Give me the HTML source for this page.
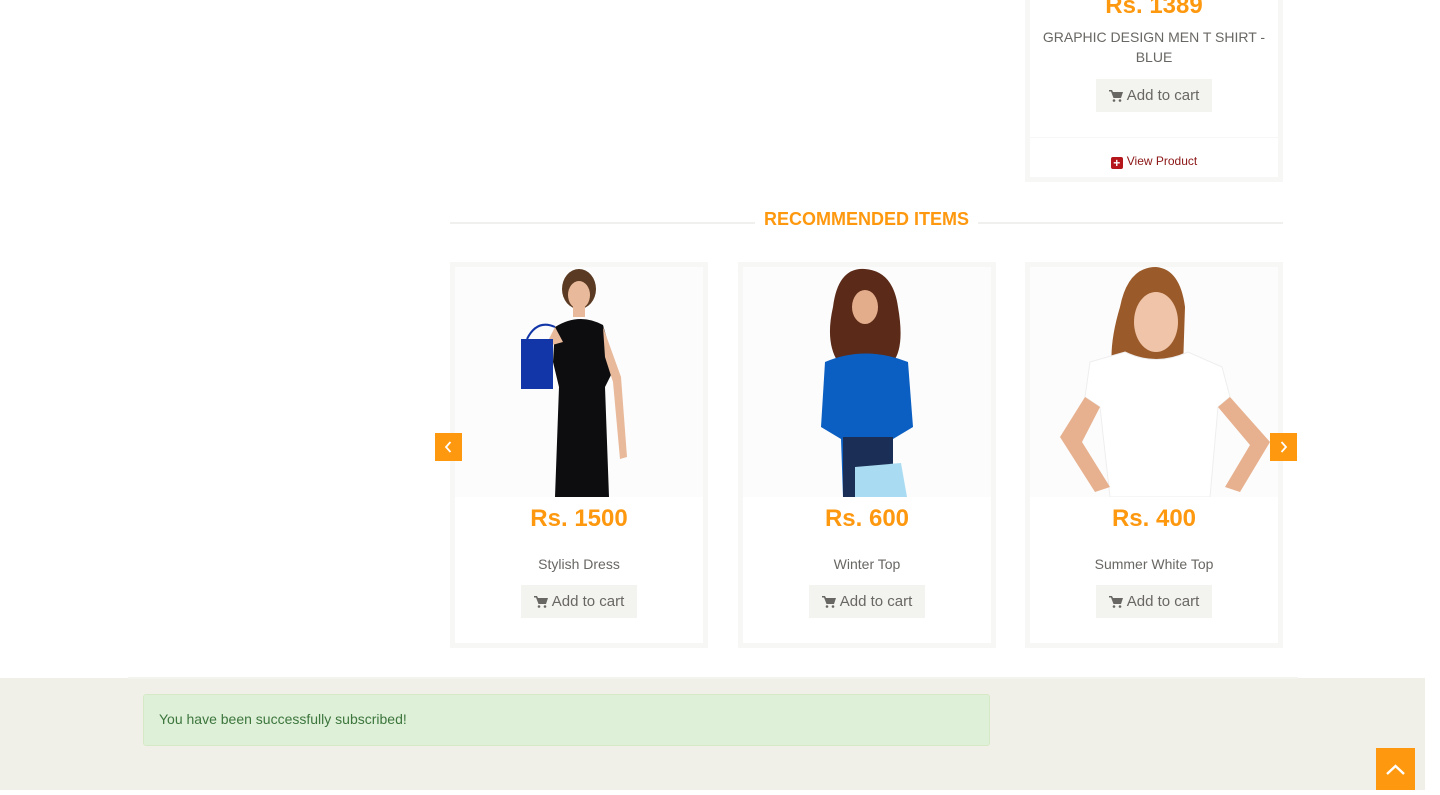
<!DOCTYPE html>
<html><head><meta charset="utf-8"><style>
*{margin:0;padding:0;box-sizing:border-box}
body{width:1440px;height:790px;overflow:hidden;background:#fff;font-family:"Liberation Sans",Arial,sans-serif;position:relative}
.a{position:absolute}
.card{position:absolute;border:5px solid #f7f7f5;background:#fff}
.price{color:#fe980f;font-weight:bold;font-size:24px;text-align:center;position:absolute;left:0;right:0}
.name{color:#696763;font-size:14px;text-align:center;position:absolute;left:0;right:0}
.btn{position:absolute;background:#f3f3ef;color:#696763;font-size:15px;height:33px;line-height:33px;text-align:center;width:116px}
.btn svg{vertical-align:-2px;margin-right:4px}
.img{position:absolute;left:0;top:0;width:248px;height:230px;background:#fcfcfc;overflow:hidden}
.arrow{position:absolute;width:27px;height:28px;background:#fe980f;color:#fff;text-align:center}
</style></head><body>

<div class="card" style="left:1025px;top:-10px;width:258px;height:192px">
  <div class="price" style="top:0px;line-height:22px;">Rs. 1389</div>
  <div class="name" style="top:32px;line-height:20px;padding:0 10px">GRAPHIC DESIGN MEN T SHIRT - BLUE</div>
  <div class="btn" style="left:66px;top:84px">
    <svg width="14" height="12" viewBox="0 0 14 12"><path d="M0 0h3l1 2h10l-2 6H4.5L2 1.5H0z" fill="#696763"/><circle cx="5" cy="10.5" r="1.3" fill="#696763"/><circle cx="11" cy="10.5" r="1.3" fill="#696763"/></svg>Add to cart</div>
  <div class="a" style="left:0;right:0;top:142px;border-top:1px solid #f7f7f5"></div>
  <div class="a" style="left:0;right:0;top:159px;text-align:center;font-size:12px;color:#8c1515;line-height:14px">
    <span style="display:inline-block;width:12px;height:12px;background:#b4161b;border-radius:2px;color:#fff;font-size:12px;line-height:12px;font-weight:bold;vertical-align:-2px;margin-right:4px">+</span>View Product</div>
</div>

<div class="a" style="left:450px;top:222px;width:833px;border-top:2px solid #f0f0ee"></div>
<div class="a" style="left:755px;top:208px;background:#fff;padding:0 9px;color:#fe980f;font-weight:bold;font-size:18px;line-height:22px">RECOMMENDED ITEMS</div>

<div class="card" style="left:450px;top:262px;width:258px;height:386px">
  <div class="img">
    <svg width="248" height="230" viewBox="0 0 248 230">
      <ellipse cx="124" cy="22" rx="17" ry="20" fill="#5a3a22"/>
      <ellipse cx="124" cy="28" rx="11" ry="14" fill="#e8b99a"/>
      <rect x="118" y="38" width="12" height="12" fill="#e8b99a"/>
      <path d="M100 60 Q124 45 148 58 L160 100 L150 120 L154 230 L100 230 L104 120 L98 95 Z" fill="#0d0d10"/>
      <path d="M148 60 L166 110 L172 190 L165 192 L158 115 L150 90Z" fill="#e8b99a"/>
      <path d="M100 60 L90 80 L108 75 Z" fill="#e8b99a"/>
      <rect x="66" y="72" width="32" height="50" fill="#1236a8"/>
      <path d="M72 72 Q82 52 100 60" stroke="#1236a8" stroke-width="2" fill="none"/>
    </svg>
  </div>
  <div class="price" style="top:237px;line-height:30px">Rs. 1500</div>
  <div class="name" style="top:288px;line-height:18px">Stylish Dress</div>
  <div class="btn" style="left:66px;top:318px">
    <svg width="14" height="12" viewBox="0 0 14 12"><path d="M0 0h3l1 2h10l-2 6H4.5L2 1.5H0z" fill="#696763"/><circle cx="5" cy="10.5" r="1.3" fill="#696763"/><circle cx="11" cy="10.5" r="1.3" fill="#696763"/></svg>Add to cart</div>
</div>

<div class="card" style="left:738px;top:262px;width:258px;height:386px">
  <div class="img">
    <svg width="248" height="230" viewBox="0 0 248 230">
      <path d="M90 40 Q95 0 122 2 Q150 4 155 40 Q162 80 150 95 L95 95 Q82 75 90 40Z" fill="#5b2a18"/>
      <ellipse cx="122" cy="40" rx="13" ry="17" fill="#e3ad8c"/>
      <path d="M82 95 Q122 78 165 95 L170 160 L150 172 L150 230 L100 230 L98 172 L78 160Z" fill="#0b5fc2"/>
      <rect x="100" y="170" width="50" height="60" fill="#1b2e55"/>
      <path d="M112 200 L158 196 L164 230 L112 230 Z" fill="#a9dcf2"/>
    </svg>
  </div>
  <div class="price" style="top:237px;line-height:30px">Rs. 600</div>
  <div class="name" style="top:288px;line-height:18px">Winter Top</div>
  <div class="btn" style="left:66px;top:318px">
    <svg width="14" height="12" viewBox="0 0 14 12"><path d="M0 0h3l1 2h10l-2 6H4.5L2 1.5H0z" fill="#696763"/><circle cx="5" cy="10.5" r="1.3" fill="#696763"/><circle cx="11" cy="10.5" r="1.3" fill="#696763"/></svg>Add to cart</div>
</div>

<div class="card" style="left:1025px;top:262px;width:258px;height:386px">
  <div class="img">
    <svg width="248" height="230" viewBox="0 0 248 230">
      <path d="M90 40 Q98 0 126 0 Q150 2 155 40 L152 130 L138 120 L110 120 L92 130 Q72 100 90 40Z" fill="#9a5a2a"/>
      <ellipse cx="126" cy="55" rx="22" ry="30" fill="#f0c4a8"/>
      <path d="M60 95 L95 85 Q126 100 158 85 L192 100 L200 130 L188 140 L180 230 L80 230 L70 140 L55 130Z" fill="#fff" stroke="#eee"/>
      <path d="M55 130 L30 170 L65 225 L80 220 L52 175 L70 140Z" fill="#e7b08e"/>
      <path d="M200 130 L240 175 L210 225 L195 220 L220 178 L188 140Z" fill="#e7b08e"/>
    </svg>
  </div>
  <div class="price" style="top:237px;line-height:30px">Rs. 400</div>
  <div class="name" style="top:288px;line-height:18px">Summer White Top</div>
  <div class="btn" style="left:66px;top:318px">
    <svg width="14" height="12" viewBox="0 0 14 12"><path d="M0 0h3l1 2h10l-2 6H4.5L2 1.5H0z" fill="#696763"/><circle cx="5" cy="10.5" r="1.3" fill="#696763"/><circle cx="11" cy="10.5" r="1.3" fill="#696763"/></svg>Add to cart</div>
</div>

<div class="arrow" style="left:435px;top:433px"><svg width="27" height="28"><path d="M15.5 9 L11 14 L15.5 19" stroke="#fff" stroke-width="1.8" fill="none"/></svg></div>
<div class="arrow" style="left:1270px;top:433px"><svg width="27" height="28"><path d="M11.5 9 L16 14 L11.5 19" stroke="#fff" stroke-width="1.8" fill="none"/></svg></div>

<div class="a" style="left:0;top:678px;width:1425px;height:112px;background:#f0f0e9"></div>
<div class="a" style="left:128px;top:677px;width:1170px;height:2px;background:#f4f4ef"></div>
<div class="a" style="left:143px;top:694px;width:847px;height:52px;background:#dff0d8;border:1px solid #d6e9c6;border-radius:3px;color:#3c763d;font-size:14px;line-height:48px;padding-left:15px">You have been successfully subscribed!</div>
<div class="a" style="left:1376px;top:748px;width:39px;height:42px;background:#fe980f"><svg width="39" height="42"><path d="M11 26 L19.5 18 L28 26" stroke="#fff" stroke-width="2.4" fill="none"/></svg></div>
</body></html>
